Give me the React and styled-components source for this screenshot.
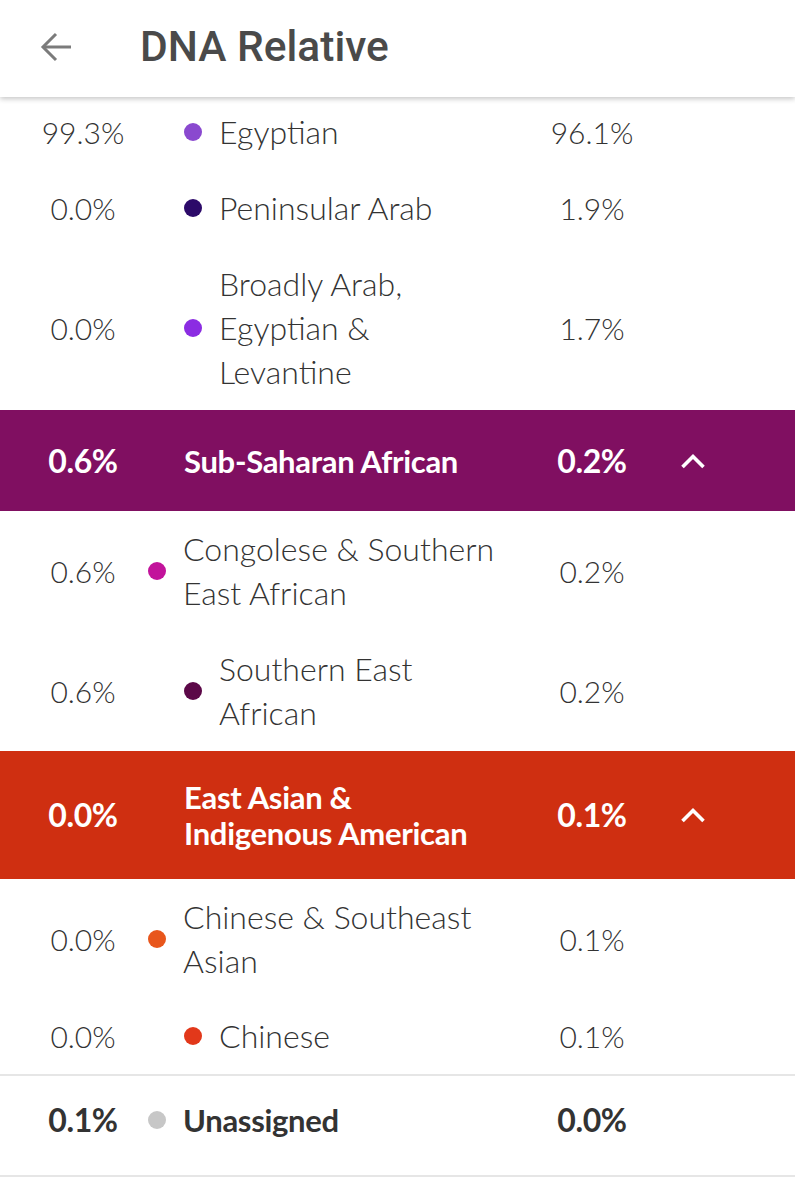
import React from "react";
import styled, { createGlobalStyle } from "styled-components";

const GlobalStyle = createGlobalStyle`
  html, body { margin: 0; padding: 0; background: #ffffff; }
  body { font-family: Lato, "Open Sans", sans-serif; -webkit-font-smoothing: antialiased; }
  * { box-sizing: border-box; }
`;

const Page = styled.div`
  width: 795px;
  min-height: 1200px;
  background: #ffffff;
`;

const TopBar = styled.header`
  position: sticky;
  top: 0;
  z-index: 2;
  height: 97px;
  display: flex;
  align-items: center;
  padding-left: 39px;
  padding-bottom: 4px;
  background: #ffffff;
  box-shadow: 0 2px 5px rgba(0, 0, 0, 0.22);
`;

const BackButton = styled.button`
  width: 34px;
  height: 34px;
  padding: 0;
  border: 0;
  background: transparent;
  display: flex;
  align-items: center;
  justify-content: center;
  margin-right: 67px;
`;

const Title = styled.h1`
  margin: 0;
  font-family: Roboto, "Noto Sans", sans-serif;
  font-weight: 500;
  font-size: 42.5px;
  color: #4a4a4a;
`;

const List = styled.main`
  margin-top: -3px;
  display: flex;
  flex-direction: column;
`;

const Row = styled.div`
  display: grid;
  grid-template-columns: 130px 1fr 100px 102px;
  align-items: center;
  padding: ${(p) => p.$pad}px 51px ${(p) => p.$padBottom ?? p.$pad}px 18px;
  min-height: ${(p) => p.$min || 0}px;
  background: ${(p) => p.$bg || "#ffffff"};
  color: ${(p) => (p.$bg ? "#ffffff" : "#333333")};
  border-bottom: ${(p) => (p.$divider ? "2px solid #e6e6e6" : "0")};
  border-top: ${(p) => (p.$topDivider ? "2px solid #e6e6e6" : "0")};
`;

const Pct = styled.div`
  text-align: center;
  font-size: ${(p) => (p.$bold ? 32 : 30)}px;
  font-weight: ${(p) => (p.$bold ? 700 : 300)};
  line-height: 44px;
  letter-spacing: ${(p) => (p.$bold ? "-0.4px" : "0")};
`;

const NameCell = styled.div`
  display: flex;
  align-items: center;
  padding-left: ${(p) => (p.$level === 2 ? 36 : 0)}px;
  padding-right: 38px;
`;

const Dot = styled.span`
  flex: 0 0 18px;
  width: 18px;
  height: 18px;
  border-radius: 50%;
  background: ${(p) => p.$color};
  margin-right: 17px;
`;

const Name = styled.span`
  font-size: 32px;
  font-weight: 300;
  line-height: 44px;
  color: #333333;
`;

const HeaderName = styled.span`
  max-width: 350px;
  padding-left: 36px;
  font-size: 31px;
  font-weight: 700;
  line-height: 36px;
  letter-spacing: -0.3px;
  color: #ffffff;
`;

const BoldName = styled.span`
  font-size: 31px;
  font-weight: 700;
  line-height: 44px;
  letter-spacing: -0.3px;
  color: #333333;
`;

const ToggleCell = styled.div`
  display: flex;
  justify-content: center;
  align-items: center;
`;

const BackArrow = () => (
  <svg width="32" height="30" viewBox="0 0 32 30" fill="none">
    <path d="M3 15H31" stroke="#7b7b7b" strokeWidth="3" />
    <path d="M16 2L3 15L16 28" stroke="#7b7b7b" strokeWidth="3" />
  </svg>
);

const ChevronUp = () => (
  <svg width="26" height="16" viewBox="0 0 26 16" fill="none">
    <path d="M2.5 14L13 3.5L23.5 14" stroke="#ffffff" strokeWidth="3.6" />
  </svg>
);

const sections = [
  {
    sub: [
      { a: "99.3%", name: "Egyptian", b: "96.1%", color: "#8a49cf", level: 2 },
      { a: "0.0%", name: "Peninsular Arab", b: "1.9%", color: "#2c0a69", level: 2 },
      { a: "0.0%", name: "Broadly Arab, Egyptian & Levantine", b: "1.7%", color: "#8b2ce2", level: 2 },
    ],
  },
  {
    header: { a: "0.6%", name: "Sub-Saharan African", b: "0.2%", bg: "#800f61" },
    sub: [
      { a: "0.6%", name: "Congolese & Southern East African", b: "0.2%", color: "#c2139b", level: 1 },
      { a: "0.6%", name: "Southern East African", b: "0.2%", color: "#5c0848", level: 2 },
    ],
  },
  {
    header: { a: "0.0%", name: "East Asian & Indigenous American", b: "0.1%", bg: "#cf2f11" },
    sub: [
      { a: "0.0%", name: "Chinese & Southeast Asian", b: "0.1%", color: "#e8561c", level: 1 },
      { a: "0.0%", name: "Chinese", b: "0.1%", color: "#e2381a", level: 2, last: true },
    ],
  },
];

export default function App() {
  return (
    <Page>
      <GlobalStyle />
      <TopBar>
        <BackButton aria-label="Back">
          <BackArrow />
        </BackButton>
        <Title>DNA Relative</Title>
      </TopBar>
      <List>
        {sections.map((s, i) => (
          <React.Fragment key={i}>
            {s.header && (
              <Row $bg={s.header.bg} $pad={28} $min={101}>
                <Pct $bold>{s.header.a}</Pct>
                <HeaderName>{s.header.name}</HeaderName>
                <Pct $bold>{s.header.b}</Pct>
                <ToggleCell>
                  <ChevronUp />
                </ToggleCell>
              </Row>
            )}
            {s.sub.map((r, j) => (
              <Row key={j} $pad={r.last ? 15 : 16} $padBottom={16}>
                <Pct>{r.a}</Pct>
                <NameCell $level={r.level}>
                  <Dot $color={r.color} />
                  <Name>{r.name}</Name>
                </NameCell>
                <Pct>{r.b}</Pct>
                <div />
              </Row>
            ))}
          </React.Fragment>
        ))}
        <Row $pad={22} $padBottom={33} $topDivider $divider>
          <Pct $bold>0.1%</Pct>
          <NameCell $level={1}>
            <Dot $color="#c7c7c7" />
            <BoldName>Unassigned</BoldName>
          </NameCell>
          <Pct $bold>0.0%</Pct>
          <div />
        </Row>
      </List>
    </Page>
  );
}
